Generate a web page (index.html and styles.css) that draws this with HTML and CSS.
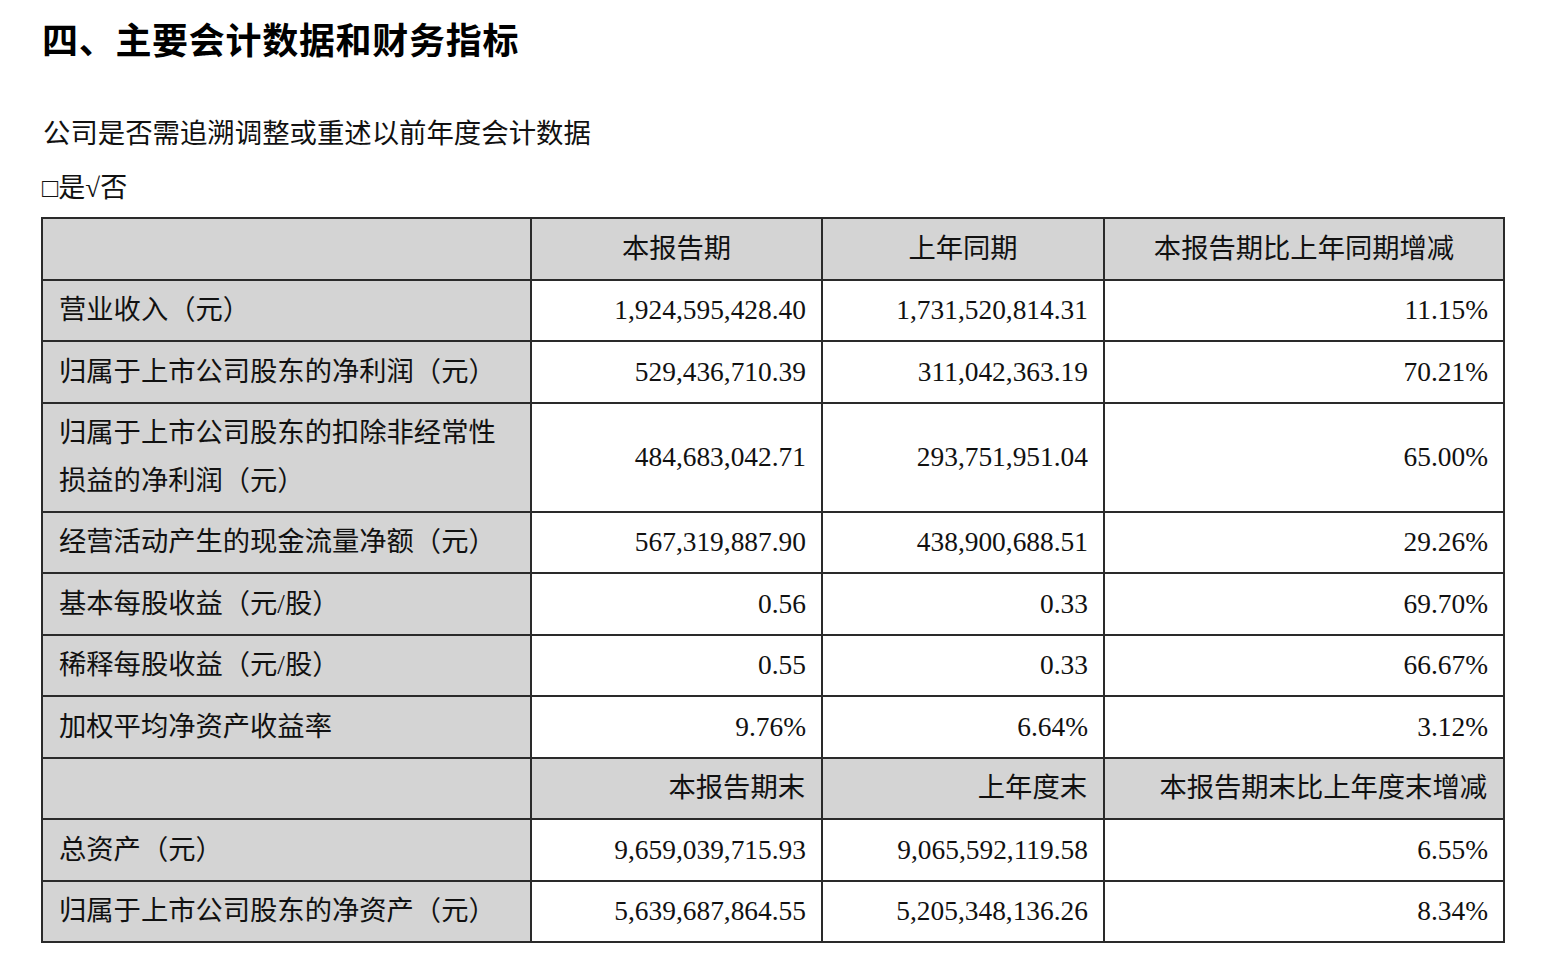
FILE: index.html
```html
<!DOCTYPE html>
<html lang="zh-CN">
<head>
<meta charset="utf-8">
<title>主要会计数据和财务指标</title>
<link rel="stylesheet" href="styles.css">
</head>
<body>
<div class="page">
  <h1 class="title">四、主要会计数据和财务指标</h1>
  <p class="question">公司是否需追溯调整或重述以前年度会计数据</p>
  <p class="answer"><span class="box">□</span>是√否</p>
  <table class="data">
    <colgroup>
      <col class="c1"><col class="c2"><col class="c3"><col class="c4">
    </colgroup>
    <tr class="head">
      <td class="label"></td>
      <td class="center">本报告期</td>
      <td class="center">上年同期</td>
      <td class="center">本报告期比上年同期增减</td>
    </tr>
    <tr>
      <td class="label">营业收入（元）</td>
      <td class="num">1,924,595,428.40</td>
      <td class="num">1,731,520,814.31</td>
      <td class="num">11.15%</td>
    </tr>
    <tr>
      <td class="label">归属于上市公司股东的净利润（元）</td>
      <td class="num">529,436,710.39</td>
      <td class="num">311,042,363.19</td>
      <td class="num">70.21%</td>
    </tr>
    <tr class="tall">
      <td class="label">归属于上市公司股东的扣除非经常性损益的净利润（元）</td>
      <td class="num">484,683,042.71</td>
      <td class="num">293,751,951.04</td>
      <td class="num">65.00%</td>
    </tr>
    <tr>
      <td class="label">经营活动产生的现金流量净额（元）</td>
      <td class="num">567,319,887.90</td>
      <td class="num">438,900,688.51</td>
      <td class="num">29.26%</td>
    </tr>
    <tr>
      <td class="label">基本每股收益（元/股）</td>
      <td class="num">0.56</td>
      <td class="num">0.33</td>
      <td class="num">69.70%</td>
    </tr>
    <tr>
      <td class="label">稀释每股收益（元/股）</td>
      <td class="num">0.55</td>
      <td class="num">0.33</td>
      <td class="num">66.67%</td>
    </tr>
    <tr>
      <td class="label">加权平均净资产收益率</td>
      <td class="num">9.76%</td>
      <td class="num">6.64%</td>
      <td class="num">3.12%</td>
    </tr>
    <tr class="head">
      <td class="label"></td>
      <td class="num">本报告期末</td>
      <td class="num">上年度末</td>
      <td class="num">本报告期末比上年度末增减</td>
    </tr>
    <tr>
      <td class="label">总资产（元）</td>
      <td class="num">9,659,039,715.93</td>
      <td class="num">9,065,592,119.58</td>
      <td class="num">6.55%</td>
    </tr>
    <tr>
      <td class="label">归属于上市公司股东的净资产（元）</td>
      <td class="num">5,639,687,864.55</td>
      <td class="num">5,205,348,136.26</td>
      <td class="num">8.34%</td>
    </tr>
  </table>
</div>
</body>
</html>
```

FILE: styles.css
```css
html, body {
  margin: 0;
  padding: 0;
  background: #ffffff;
  color: #111111;
}

.page {
  padding: 14px 0 0 42px;
  font-family: "Liberation Serif", "Noto Sans CJK SC", serif;
}

.title {
  margin: 0;
  font-family: "Noto Sans CJK SC", sans-serif;
  font-size: 36px;
  font-weight: 700;
  line-height: 48px;
  letter-spacing: 0.7px;
  color: #000000;
}

.question {
  margin: 52px 0 0 1px;
  font-size: 27.4px;
  line-height: 40px;
  color: #111111;
}

.answer {
  margin: 14px 0 0 0;
  height: 40px;
  font-size: 27px;
  line-height: 40px;
  color: #111111;
}

.box {
  font-size: 27px;
  line-height: 0;
  vertical-align: baseline;
}

.data {
  margin: 9px 0 0 -1px;
  border-collapse: collapse;
  table-layout: fixed;
  width: 1462px;
  border: 2px solid #2a2a2a;
}

.c1 { width: 489px; }
.c2 { width: 291px; }
.c3 { width: 282px; }
.c4 { width: 400px; }

.data td {
  border: 2px solid #2a2a2a;
  height: 59.5px;
  padding: 0 16px;
  font-size: 27.3px;
  line-height: 48px;
  vertical-align: middle;
  color: #111111;
  white-space: nowrap;
}

.data td.label {
  background: #d4d4d4;
  text-align: left;
  white-space: normal;
}

.data tr.head td {
  background: #d4d4d4;
}

.data td.center {
  text-align: center;
}

.data td.num {
  text-align: right;
  font-size: 27.4px;
  padding-right: 15px;
}

.data tr.head td.num {
  font-size: 27.3px;
  padding-right: 16px;
}

.data tr.tall td {
  height: 107px;
}
```
